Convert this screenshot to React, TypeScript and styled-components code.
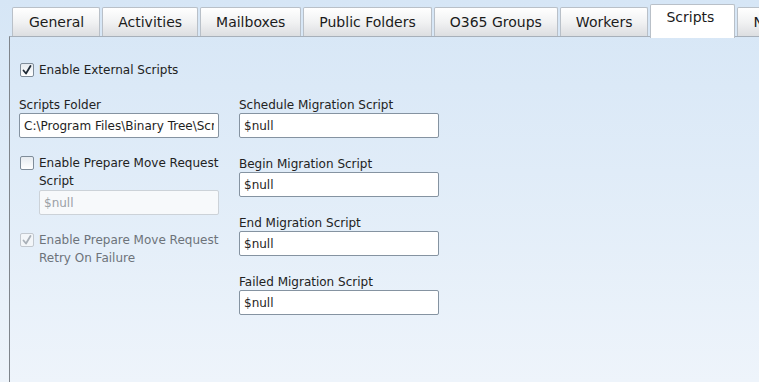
import styled, { createGlobalStyle } from "styled-components";

const GlobalStyle = createGlobalStyle`
  html, body {
    margin: 0;
    padding: 0;
  }
  body {
    font-family: "DejaVu Sans", Verdana, sans-serif;
    background: #d7e7f6;
  }
`;

const tabs = ["General", "Activities", "Mailboxes", "Public Folders", "O365 Groups", "Workers", "Scripts", "Notifications"];

const scripts = ["Schedule Migration Script", "Begin Migration Script", "End Migration Script", "Failed Migration Script"];

export default function App() {
    return (
        <>
            <GlobalStyle/>
            <Page>
                <TabBar>
                    {tabs.map(t => (
                        <Tab key={t} $active={t === "Scripts"}>{t}</Tab>
                    ))}
                </TabBar>
                <Panel>
                    <CheckRow>
                        <Check $checked/>
                        <CheckText>Enable External Scripts</CheckText>
                    </CheckRow>
                    <Columns>
                        <Column $gap={16}>
                            <Field>
                                <Label>Scripts Folder</Label>
                                <Input defaultValue="C:\Program Files\Binary Tree\Scripts"/>
                            </Field>
                            <div>
                                <CheckRow>
                                    <Check/>
                                    <CheckText>Enable Prepare Move Request Script</CheckText>
                                </CheckRow>
                                <Indented>
                                    <Input disabled defaultValue="$null"/>
                                </Indented>
                            </div>
                            <CheckRow $disabled>
                                <Check $checked $disabled/>
                                <CheckText>Enable Prepare Move Request Retry On Failure</CheckText>
                            </CheckRow>
                        </Column>
                        <Column $gap={18}>
                            {scripts.map(l => (
                                <Field key={l}>
                                    <Label>{l}</Label>
                                    <Input defaultValue="$null"/>
                                </Field>
                            ))}
                        </Column>
                    </Columns>
                </Panel>
            </Page>
        </>
    );
}

const Check = ({$checked, $disabled}: { $checked?: boolean, $disabled?: boolean }) => (
    <Box $disabled={$disabled}>
        {$checked && (
            <svg width="12" height="12" viewBox="0 0 12 12">
                <path d="M2.5 6.5 L5 9.5 L9.5 2" fill="none" stroke={$disabled ? "#a9b0b8" : "#1f2a36"}
                      strokeWidth="1.8" strokeLinecap="round" strokeLinejoin="round"/>
            </svg>
        )}
    </Box>
);

const Page = styled.div`
    width: 759px;
    height: 382px;
    overflow: hidden;
    display: flex;
    flex-direction: column;
    background: linear-gradient(180deg, #d6e6f6 0%, #e0ecf8 45%, #eef4fb 100%);
`

const TabBar = styled.div`
    display: flex;
    align-items: flex-end;
    gap: 2px;
    height: 36px;
    padding-left: 12px;
    flex-shrink: 0;
    white-space: nowrap;
`

const Tab = styled.div<{ $active?: boolean }>`
    flex-shrink: 0;
    box-sizing: border-box;
    height: ${p => p.$active ? 34 : 29}px;
    margin-bottom: ${p => p.$active ? -2 : 0}px;
    padding: ${p => p.$active ? "4px 20px 0 15px" : "0 15px"};
    display: flex;
    align-items: ${p => p.$active ? "flex-start" : "center"};
    border: 1px solid #b9c0c8;
    border-bottom: none;
    border-radius: 2px 2px 0 0;
    background: ${p => p.$active ? "#ffffff" : "linear-gradient(180deg, #ffffff 0%, #f1f2f3 50%, #dcdee1 100%)"};
    color: #1b1b1b;
    font-size: 14px;
    position: relative;
    z-index: ${p => p.$active ? 2 : 1};

    &:first-child {
        padding-left: 16px;
    }
`

const Panel = styled.div`
    flex: 1;
    margin-left: 9px;
    border-left: 1px solid #7f858c;
    border-top: 1px solid #a7b0ba;
    padding: 24px 0 0 9px;
    color: #222;
    font-size: 12px;
`

const CheckRow = styled.div<{ $disabled?: boolean }>`
    display: flex;
    align-items: flex-start;
    gap: 5px;
    color: ${p => p.$disabled ? "#6d737a" : "#222"};
    line-height: 18px;
`

const Box = styled.span<{ $disabled?: boolean }>`
    box-sizing: border-box;
    flex-shrink: 0;
    width: 14px;
    height: 14px;
    margin: 2px 0 0 1px;
    display: flex;
    align-items: center;
    justify-content: center;
    border: 1px solid ${p => p.$disabled ? "#c2c8cf" : "#7f8c99"};
    border-radius: 2px;
    background: ${p => p.$disabled ? "#f3f6f9" : "linear-gradient(180deg, #e6ebf0 0%, #ffffff 100%)"};
`

const CheckText = styled.span`
    width: 182px;
`

const Columns = styled.div`
    display: grid;
    grid-template-columns: 200px 200px;
    column-gap: 20px;
    margin-top: 18px;
`

const Column = styled.div<{ $gap: number }>`
    display: flex;
    flex-direction: column;
    gap: ${p => p.$gap}px;
`

const Field = styled.div`
    display: flex;
    flex-direction: column;
    line-height: 16px;
`

const Label = styled.div``

const Indented = styled.div`
    padding-left: 20px;
`

const Input = styled.input`
    box-sizing: border-box;
    width: 100%;
    height: 25px;
    margin: 0;
    padding: 0 4px;
    border: 1px solid #8593a1;
    border-radius: 2px;
    background: #fff;
    font-family: "DejaVu Sans", Verdana, sans-serif;
    font-size: 12px;
    color: #1e1e1e;
    outline: none;

    &:disabled {
        border-color: #ccd2d8;
        background: #f7f9fb;
        color: #9aa0a6;
    }
`
